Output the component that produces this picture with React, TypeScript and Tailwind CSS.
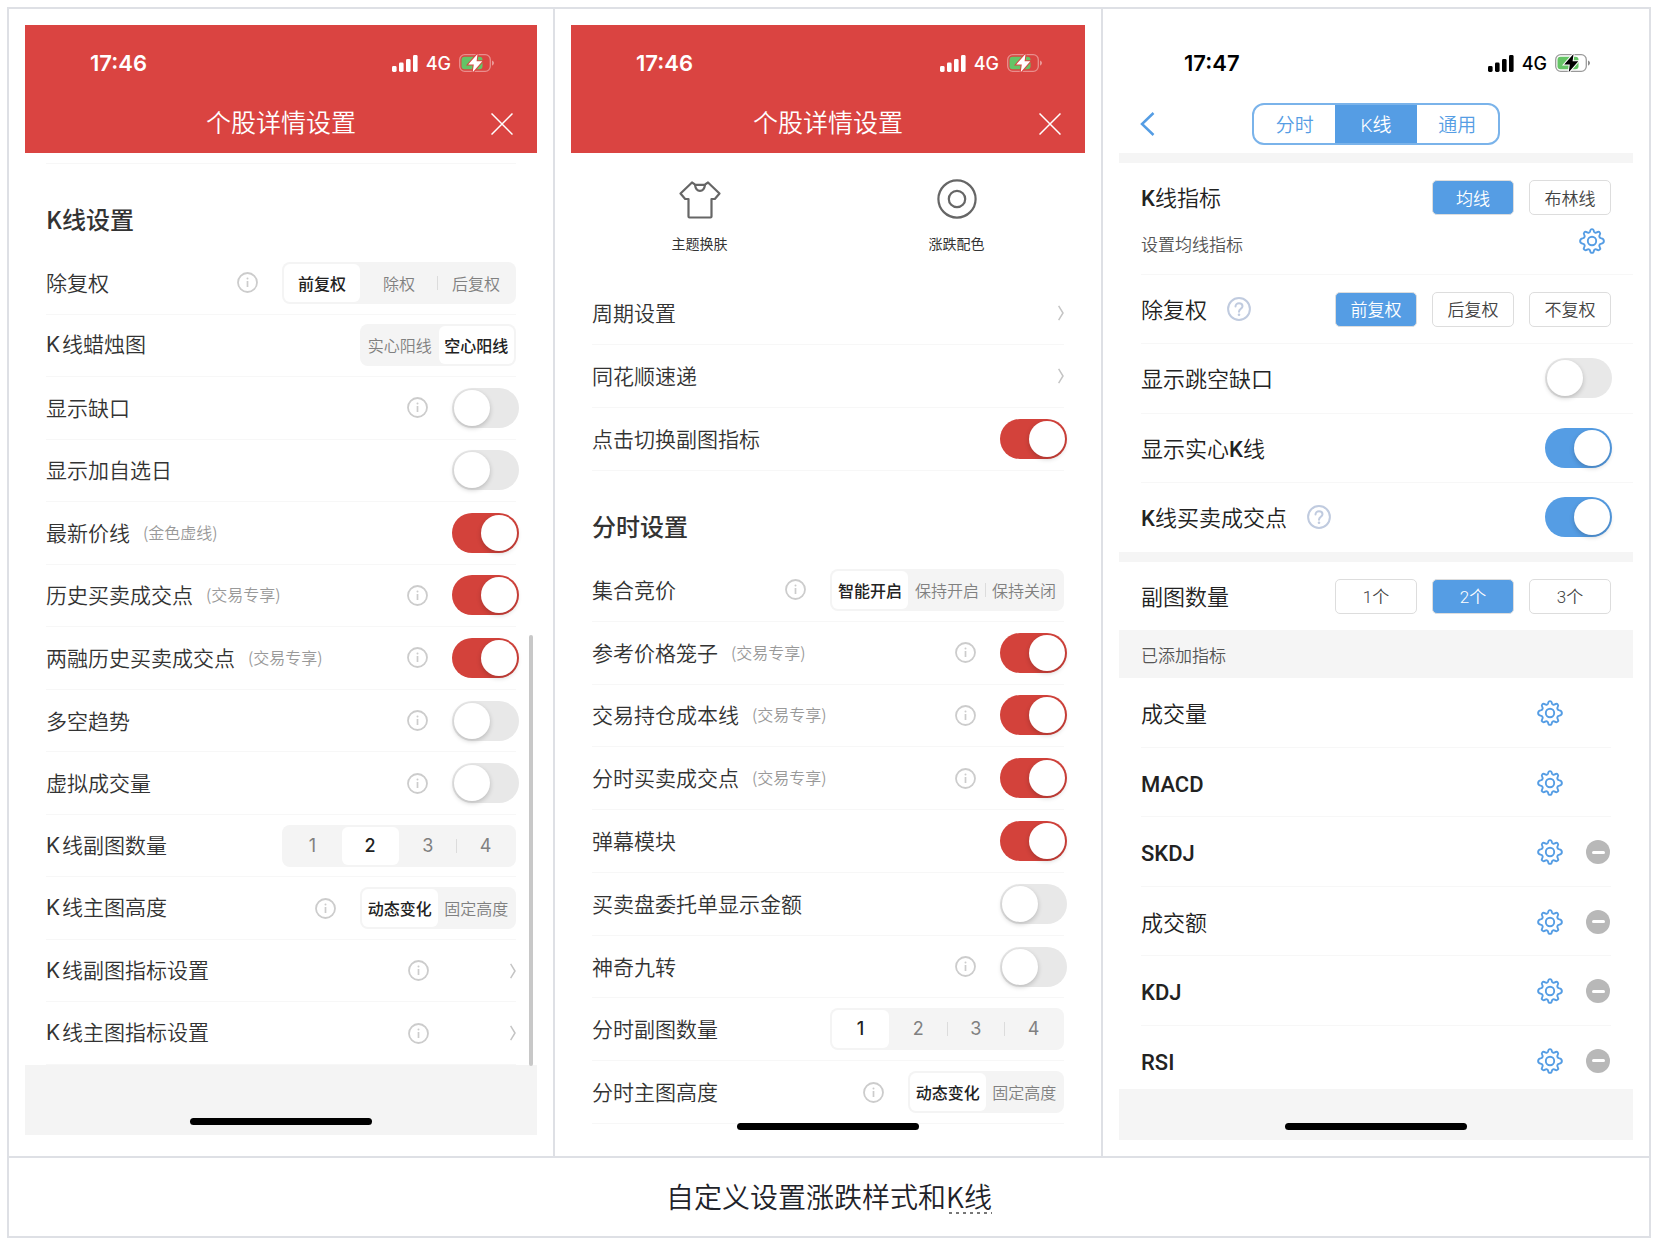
import { Fragment, type ReactNode } from "react";

type Option = { name: string; options: string[]; selected: number };

type Setting = {
  label: string;
  note?: string;
  info?: boolean;
  on?: boolean;
  choice?: Option;
  link?: boolean;
};

const klineSettings: Setting[] = [
  { label: "除复权", info: true, choice: { name: "adjust", options: ["前复权", "除权", "后复权"], selected: 0 } },
  { label: "K线蜡烛图", choice: { name: "candle", options: ["实心阳线", "空心阳线"], selected: 1 } },
  { label: "显示缺口", info: true, on: false },
  { label: "显示加自选日", on: false },
  { label: "最新价线", note: "(金色虚线)", on: true },
  { label: "历史买卖成交点", note: "(交易专享)", info: true, on: true },
  { label: "两融历史买卖成交点", note: "(交易专享)", info: true, on: true },
  { label: "多空趋势", info: true, on: false },
  { label: "虚拟成交量", info: true, on: false },
  { label: "K线副图数量", choice: { name: "kline-sub", options: ["1", "2", "3", "4"], selected: 1 } },
  { label: "K线主图高度", info: true, choice: { name: "kline-height", options: ["动态变化", "固定高度"], selected: 0 } },
  { label: "K线副图指标设置", info: true, link: true },
  { label: "K线主图指标设置", info: true, link: true },
];

const generalSettings: Setting[] = [
  { label: "周期设置", link: true },
  { label: "同花顺速递", link: true },
  { label: "点击切换副图指标", on: true },
];

const minuteSettings: Setting[] = [
  { label: "集合竞价", info: true, choice: { name: "auction", options: ["智能开启", "保持开启", "保持关闭"], selected: 0 } },
  { label: "参考价格笼子", note: "(交易专享)", info: true, on: true },
  { label: "交易持仓成本线", note: "(交易专享)", info: true, on: true },
  { label: "分时买卖成交点", note: "(交易专享)", info: true, on: true },
  { label: "弹幕模块", on: true },
  { label: "买卖盘委托单显示金额", on: false },
  { label: "神奇九转", info: true, on: false },
  { label: "分时副图数量", choice: { name: "minute-sub", options: ["1", "2", "3", "4"], selected: 0 } },
  { label: "分时主图高度", info: true, choice: { name: "minute-height", options: ["动态变化", "固定高度"], selected: 0 } },
];

const indicators = [
  { name: "成交量", removable: false },
  { name: "MACD", removable: false },
  { name: "SKDJ", removable: true },
  { name: "成交额", removable: true },
  { name: "KDJ", removable: true },
  { name: "RSI", removable: true },
];

function StatusBar({ time, dark = false }: { time: string; dark?: boolean }) {
  return (
    <div className="flex h-[76px] items-center justify-between pl-[65px] pr-[42px]">
      <span className="font-['Inter'] text-[22px] font-semibold leading-7">{time}</span>
      <div className="flex items-center gap-2">
        <svg width="26" height="17" viewBox="0 0 26 17" fill="currentColor" aria-hidden="true">
          <rect x="0" y="11" width="4.6" height="6" rx="1.4" />
          <rect x="7" y="7.6" width="4.6" height="9.4" rx="1.4" />
          <rect x="14" y="4" width="4.6" height="13" rx="1.4" />
          <rect x="21" y="0" width="4.6" height="17" rx="1.4" />
        </svg>
        <span className="pt-0.5 font-['Inter'] text-[18px] font-medium leading-6">4G</span>
        <svg width="36" height="20" viewBox="0 0 36 20" aria-hidden="true">
          <rect x="0.7" y="1.7" width="30.6" height="16.6" rx="5" fill="none" stroke="currentColor" strokeOpacity="0.4" strokeWidth="1.3" />
          <path d="M33 7.4c1.200.4 2 1.400 2 2.600s-.8 2.200-2 2.600z" fill="currentColor" fillOpacity="0.45" />
          <rect x="2.500" y="3.700" width="21" height="12.600" rx="3" fill="#65c466" />
          <path
            d="M18.500 1 9.200 11.500h5.600L13.700 19.300 23.300 8.300h-5.700z"
            fill="currentColor"
            stroke={dark ? "#ffffff" : "#da4441"}
            strokeWidth="2"
            paintOrder="stroke"
          />
        </svg>
      </div>
    </div>
  );
}

function RedHeader() {
  return (
    <header className="bg-[#da4441] text-white">
      <StatusBar time="17:46" />
      <div className="grid h-[52px] grid-cols-[1fr_auto_1fr] items-center px-6 pb-1.5">
        <h1 className="col-start-2 pb-1.5 text-[25px] font-[350] leading-9">个股详情设置</h1>
        <button type="button" aria-label="关闭" className="justify-self-end">
          <svg width="22" height="22" viewBox="0 0 22 22" fill="none" stroke="currentColor" strokeWidth="1.5">
            <path d="M.5.5l21 21M21.500.5l-21 21" />
          </svg>
        </button>
      </div>
    </header>
  );
}

function InfoIcon() {
  return (
    <svg width="21" height="21" viewBox="0 0 21 21" fill="none" aria-hidden="true">
      <circle cx="10.500" cy="10.500" r="9.500" stroke="#cccccc" strokeWidth="1.800" />
      <circle cx="10.500" cy="6.600" r="1" fill="#cccccc" />
      <path d="M10.500 9v6" stroke="#cccccc" strokeWidth="1.700" />
    </svg>
  );
}

function HelpIcon() {
  return (
    <svg width="24" height="24" viewBox="0 0 24 24" fill="none" stroke="#c0cbdf" strokeWidth="2" aria-hidden="true">
      <circle cx="12" cy="12" r="10.900" />
      <path d="M8.500 9.600c0-2 1.500-3.400 3.500-3.400s3.500 1.300 3.500 3.100c0 2.400-3.500 2.700-3.500 5.500" strokeLinecap="round" />
      <circle cx="12" cy="17.800" r="1.300" fill="#c0cbdf" stroke="none" />
    </svg>
  );
}

function GearIcon() {
  return (
    <svg width="26" height="26" viewBox="0 0 26 26" fill="none" stroke="#559de4" strokeWidth="1.900" strokeLinejoin="round" aria-hidden="true">
      <path d="M13 1.100c1.100 0 1.700.9 1.900 2.100.3 1.400 1.800 1.900 2.900 1.200 1.100-.7 2.200-.8 2.900-.1s.6 1.800-.1 2.900c-.7 1.100-.2 2.600 1.200 2.900 1.200.2 3.100.8 3.100 2.900s-1.900 2.700-3.100 2.900c-1.400.3-1.900 1.800-1.200 2.900.7 1.100.8 2.200.1 2.900s-1.800.6-2.900-.1c-1.100-.7-2.600-.2-2.900 1.200-.2 1.200-.8 2.100-1.900 2.100s-1.700-.9-1.900-2.100c-.3-1.400-1.800-1.900-2.900-1.200-1.100.7-2.200.8-2.900.1s-.6-1.800.1-2.900c.7-1.100.2-2.600-1.200-2.900-1.200-.2-3.100-.8-3.100-2.900s1.900-2.700 3.100-2.900c1.400-.3 1.900-1.800 1.200-2.900-.7-1.100-.8-2.200-.1-2.900s1.800-.6 2.900.1c1.100.7 2.600.2 2.900-1.200C11.300 2 11.900 1.100 13 1.100z" />
      <circle cx="13" cy="13" r="4.200" />
    </svg>
  );
}

function Switch({ label, on, color = "red" }: { label: string; on: boolean; color?: "red" | "blue" }) {
  return (
    <input
      type="checkbox"
      role="switch"
      aria-label={label}
      defaultChecked={on}
      className={`h-10 w-[67px] shrink-0 appearance-none rounded-full bg-[#e8e8e8] p-0.5 before:block before:size-9 before:rounded-full before:bg-white before:shadow-[0_2px_5px_rgba(0,0,0,0.2)] checked:before:ml-[27px] ${
        color === "red" ? "checked:bg-[#d3423b]" : "checked:bg-[#559de4]"
      }`}
    />
  );
}

function Segmented({ label, choice }: { label: string; choice: Option }) {
  const { name, options, selected } = choice;
  const numeric = options.length === 4;

  return (
    <div
      role="radiogroup"
      aria-label={label}
      className={`flex h-[42px] items-center rounded-lg bg-[#f4f4f4] p-0.5 ${options.length === 2 ? "w-[156px]" : "w-[234px]"} ${
        numeric ? "font-['Inter'] text-[18px] font-normal" : "text-[16px] font-[350]"
      }`}
    >
      {options.map((option, i) => (
        <Fragment key={option}>
          {i > 0 && <span className={`h-3.5 w-px ${i === selected || i - 1 === selected ? "" : "bg-[#dcdcdc]"}`} />}
          <label className="flex h-full flex-1 items-center justify-center whitespace-nowrap rounded-md leading-6 text-[#808080] has-checked:bg-white has-checked:font-medium has-checked:text-[#222]">
            <input type="radio" name={name} defaultChecked={i === selected} className="sr-only" />
            {option}
          </label>
        </Fragment>
      ))}
    </div>
  );
}

function SettingRow({ label, note, info, on, choice, link }: Setting) {
  return (
    <li className="flex items-center border-b border-[#f7f7f7] text-[#333]">
      <span className="pb-0.5 text-[21px] font-[350] leading-8">
        {label.startsWith("K") ? (
          <>
            <span className="mr-0.5 font-['Inter'] font-normal">K</span>
            {label.slice(1)}
          </>
        ) : (
          label
        )}
      </span>
      {note && <span className="ml-[13px] pb-0.5 text-[16px] font-[350] leading-6 text-[#999]">{note}</span>}
      <div className="ml-auto flex items-center gap-6">
        {info && (
          <button type="button" aria-label={`${label}说明`}>
            <InfoIcon />
          </button>
        )}
        {on !== undefined && (
          <div className="-mr-[3px] flex">
            <Switch label={label} on={on} />
          </div>
        )}
        {choice && <Segmented label={label} choice={choice} />}
        {link && (
          <a href="#" aria-label={label} className="flex w-[63px] justify-end">
            <svg width="6" height="16" viewBox="0 0 6 16" fill="none" stroke="#c4c4c4" strokeWidth="1.500">
              <path d="M.6.8 5 8 .6 15.200" />
            </svg>
          </a>
        )}
      </div>
    </li>
  );
}

function SectionTitle({ children }: { children: ReactNode }) {
  return <h2 className="px-[21px] pb-[17px] pt-[39px] text-[24px] font-medium leading-8 text-[#333]">{children}</h2>;
}

function HomeIndicator() {
  return <div className="mx-auto mb-2.5 mt-auto h-[7px] w-[182px] rounded-full bg-black" />;
}

function KlineScreen() {
  return (
    <section className="flex flex-col">
      <RedHeader />
      <div className="relative">
        <div className="mx-[21px] h-[11px] border-b border-[#f7f7f7]" />
        <SectionTitle>K线设置</SectionTitle>
        <ul className="grid h-[813px] auto-rows-fr px-[21px]">
          {klineSettings.map((s) => (
            <SettingRow key={s.label} {...s} />
          ))}
        </ul>
        <div className="absolute -bottom-px right-1 h-[431px] w-1 rounded-full bg-[#c8c8c8]" />
      </div>
      <div className="flex h-[70px] flex-col bg-[#f4f4f4]">
        <HomeIndicator />
      </div>
    </section>
  );
}

function MinuteScreen() {
  return (
    <section className="relative flex flex-col">
      <RedHeader />
      <div className="grid grid-cols-2 pb-[29px] pt-[25px] text-[14px] font-normal leading-5 text-[#333]">
        <button type="button" className="flex flex-col items-center gap-[13px]">
          <svg width="42" height="42" viewBox="0 0 42 42" fill="none" stroke="#666666" strokeWidth="2.200" strokeLinejoin="round">
            <path d="M13 4.500 1.500 15.500l4.700 5.500H9.500v17.500a1 1 0 0 0 1 1h21a1 1 0 0 0 1-1V21h3.300l4.700-5.500L29 4.500l-3.500 2.300h-9z" />
            <path d="M16 6.800c.5 3.800 2.500 6 5 6s4.500-2.200 5-6" />
          </svg>
          主题换肤
        </button>
        <button type="button" className="flex flex-col items-center gap-[13px]">
          <svg width="42" height="42" viewBox="0 0 42 42" fill="none" stroke="#666666" strokeWidth="2.200">
            <circle cx="21" cy="21" r="18.600" />
            <circle cx="21" cy="21" r="8.200" />
          </svg>
          涨跌配色
        </button>
      </div>
      <ul className="grid h-[189px] auto-rows-fr px-[21px]">
        {generalSettings.map((s) => (
          <SettingRow key={s.label} {...s} />
        ))}
      </ul>
      <SectionTitle>分时设置</SectionTitle>
      <ul className="grid h-[565px] auto-rows-fr px-[21px]">
        {minuteSettings.map((s) => (
          <SettingRow key={s.label} {...s} />
        ))}
      </ul>
      {/* the home indicator floats over the end of the list */}
      <div className="absolute inset-x-0 bottom-0 flex flex-col">
        <HomeIndicator />
      </div>
    </section>
  );
}

function ChipGroup({ label, name, options, selected }: Option & { label: string }) {
  return (
    <div role="radiogroup" aria-label={label} className="ml-auto flex gap-[15px]">
      {options.map((option, i) => (
        <label
          key={option}
          className="flex h-[35px] w-[82px] items-center justify-center rounded-[5px] border border-[#dddddd] pt-0.5 text-[17px] leading-6 text-[#444] has-checked:bg-[#559de4] has-checked:text-white"
        >
          <input type="radio" name={name} defaultChecked={i === selected} className="sr-only" />
          {option}
        </label>
      ))}
    </div>
  );
}

function K() {
  return <span className="font-medium">K</span>;
}

function ToolScreen() {
  return (
    <section className="flex flex-col font-['Roboto','Noto_Sans_CJK_SC',sans-serif] text-[22px] font-[350] leading-8 text-[#222]">
      <header className="text-black">
        <StatusBar time="17:47" dark />
        <div className="grid h-[52px] grid-cols-[1fr_auto_1fr] items-center px-[21px] pb-1.5">
          <button type="button" aria-label="返回" className="justify-self-start">
            <svg width="15" height="24" viewBox="0 0 15 24" fill="none" stroke="#559de4" strokeWidth="2.500">
              <path d="M13.500 1 2 12l11.500 11" />
            </svg>
          </button>
          <nav className="grid h-[42px] w-[248px] grid-cols-3 overflow-hidden rounded-xl border-2 border-[#7ab3ea] text-[19px] leading-6 text-[#559de4]">
            <button type="button" className="pt-1">
              分时
            </button>
            <button type="button" className="bg-[#559de4] pt-1 text-white">
              K线
            </button>
            <button type="button" className="pt-1">
              通用
            </button>
          </nav>
        </div>
      </header>
      <div className="h-2.5 bg-[#f5f5f5]" />
      <div className="pl-[22px]">
        <div className="border-b border-[#f7f7f7] pb-4 pr-[22px] pt-[17px]">
          <div className="flex items-center">
            <span className="pt-0.5">
              <K />线指标
            </span>
            <ChipGroup label="K线指标" name="kline-indicator" options={["均线", "布林线"]} selected={0} />
          </div>
          <div className="flex h-[43px] items-center justify-between pr-1.5 pt-2">
            <span className="pt-2 text-[17px] leading-6 text-[#555]">设置均线指标</span>
            <button type="button" aria-label="设置均线指标">
              <GearIcon />
            </button>
          </div>
        </div>
        <div className="grid h-[277px] auto-rows-fr">
          <div className="flex items-center border-b border-[#f7f7f7] pr-[22px]">
            <span className="mr-5 pt-1">除复权</span>
            <HelpIcon />
            <ChipGroup label="除复权" name="tool-adjust" options={["前复权", "后复权", "不复权"]} selected={0} />
          </div>
          <div className="flex items-center justify-between border-b border-[#f7f7f7] pr-[21px]">
            <span className="pt-1">显示跳空缺口</span>
            <Switch label="显示跳空缺口" on={false} color="blue" />
          </div>
          <div className="flex items-center justify-between border-b border-[#f7f7f7] pr-[21px]">
            <span className="pt-1">
              显示实心
              <K />线
            </span>
            <Switch label="显示实心K线" on color="blue" />
          </div>
          <div className="flex items-center pr-[21px]">
            <span className="mr-5 pt-1">
              <K />线买卖成交点
            </span>
            <HelpIcon />
            <div className="ml-auto flex">
              <Switch label="K线买卖成交点" on color="blue" />
            </div>
          </div>
        </div>
      </div>
      <div className="h-2.5 bg-[#f5f5f5]" />
      <div className="flex h-[68px] items-center px-[22px]">
        <span className="pt-1">副图数量</span>
        <ChipGroup label="副图数量" name="tool-sub" options={["1个", "2个", "3个"]} selected={1} />
      </div>
      <h2 className="bg-[#f5f5f5] px-[22px] pb-2.5 pt-3.5 text-[17px] leading-6 text-[#555]">已添加指标</h2>
      <div className="h-[411px] overflow-hidden px-[22px]">
        <ul className="grid h-[417px] auto-rows-fr">
          {indicators.map(({ name, removable }) => (
            <li key={name} className="flex items-center gap-[23px] border-b border-[#f7f7f7] pr-px pt-0.5">
              <span className={`mr-auto pt-1 ${/[A-Z]/.test(name) ? "font-medium" : ""}`}>{name}</span>
              <button type="button" aria-label={`设置${name}`}>
                <GearIcon />
              </button>
              {removable ? (
                <button type="button" aria-label={`移除${name}`} className="flex size-6 items-center justify-center rounded-full bg-[#b8b8b8]">
                  <span className="h-[3px] w-[13px] rounded-full bg-white" />
                </button>
              ) : (
                <span className="size-6" />
              )}
            </li>
          ))}
        </ul>
      </div>
      <div className="flex h-[51px] flex-col bg-[#f5f5f5]">
        <HomeIndicator />
      </div>
    </section>
  );
}

export default function App() {
  return (
    <main className="bg-white p-[7px] font-['Noto_Sans_CJK_SC',sans-serif]">
      <figure className="border-2 border-[#dee0e5]">
        <div className="grid grid-cols-[544fr_548fr_548fr]">
          <div className="p-4">
            <KlineScreen />
          </div>
          <div className="grid border-l-2 border-[#dee0e5] p-4">
            <MinuteScreen />
          </div>
          <div className="border-l-2 border-[#dee0e5] p-4">
            <ToolScreen />
          </div>
        </div>
        <figcaption className="border-t-2 border-[#dee0e5] pb-[19px] pt-[17px] text-center text-[28px] font-[350] leading-[42px] text-[#1f2329]">
          自定义设置涨跌样式和
          <span className="bg-[repeating-linear-gradient(90deg,#777_0_3px,transparent_3px_7px)] bg-[length:100%_2px] bg-[position:3px_calc(100%-2px)] bg-no-repeat">
            K线
          </span>
        </figcaption>
      </figure>
    </main>
  );
}
